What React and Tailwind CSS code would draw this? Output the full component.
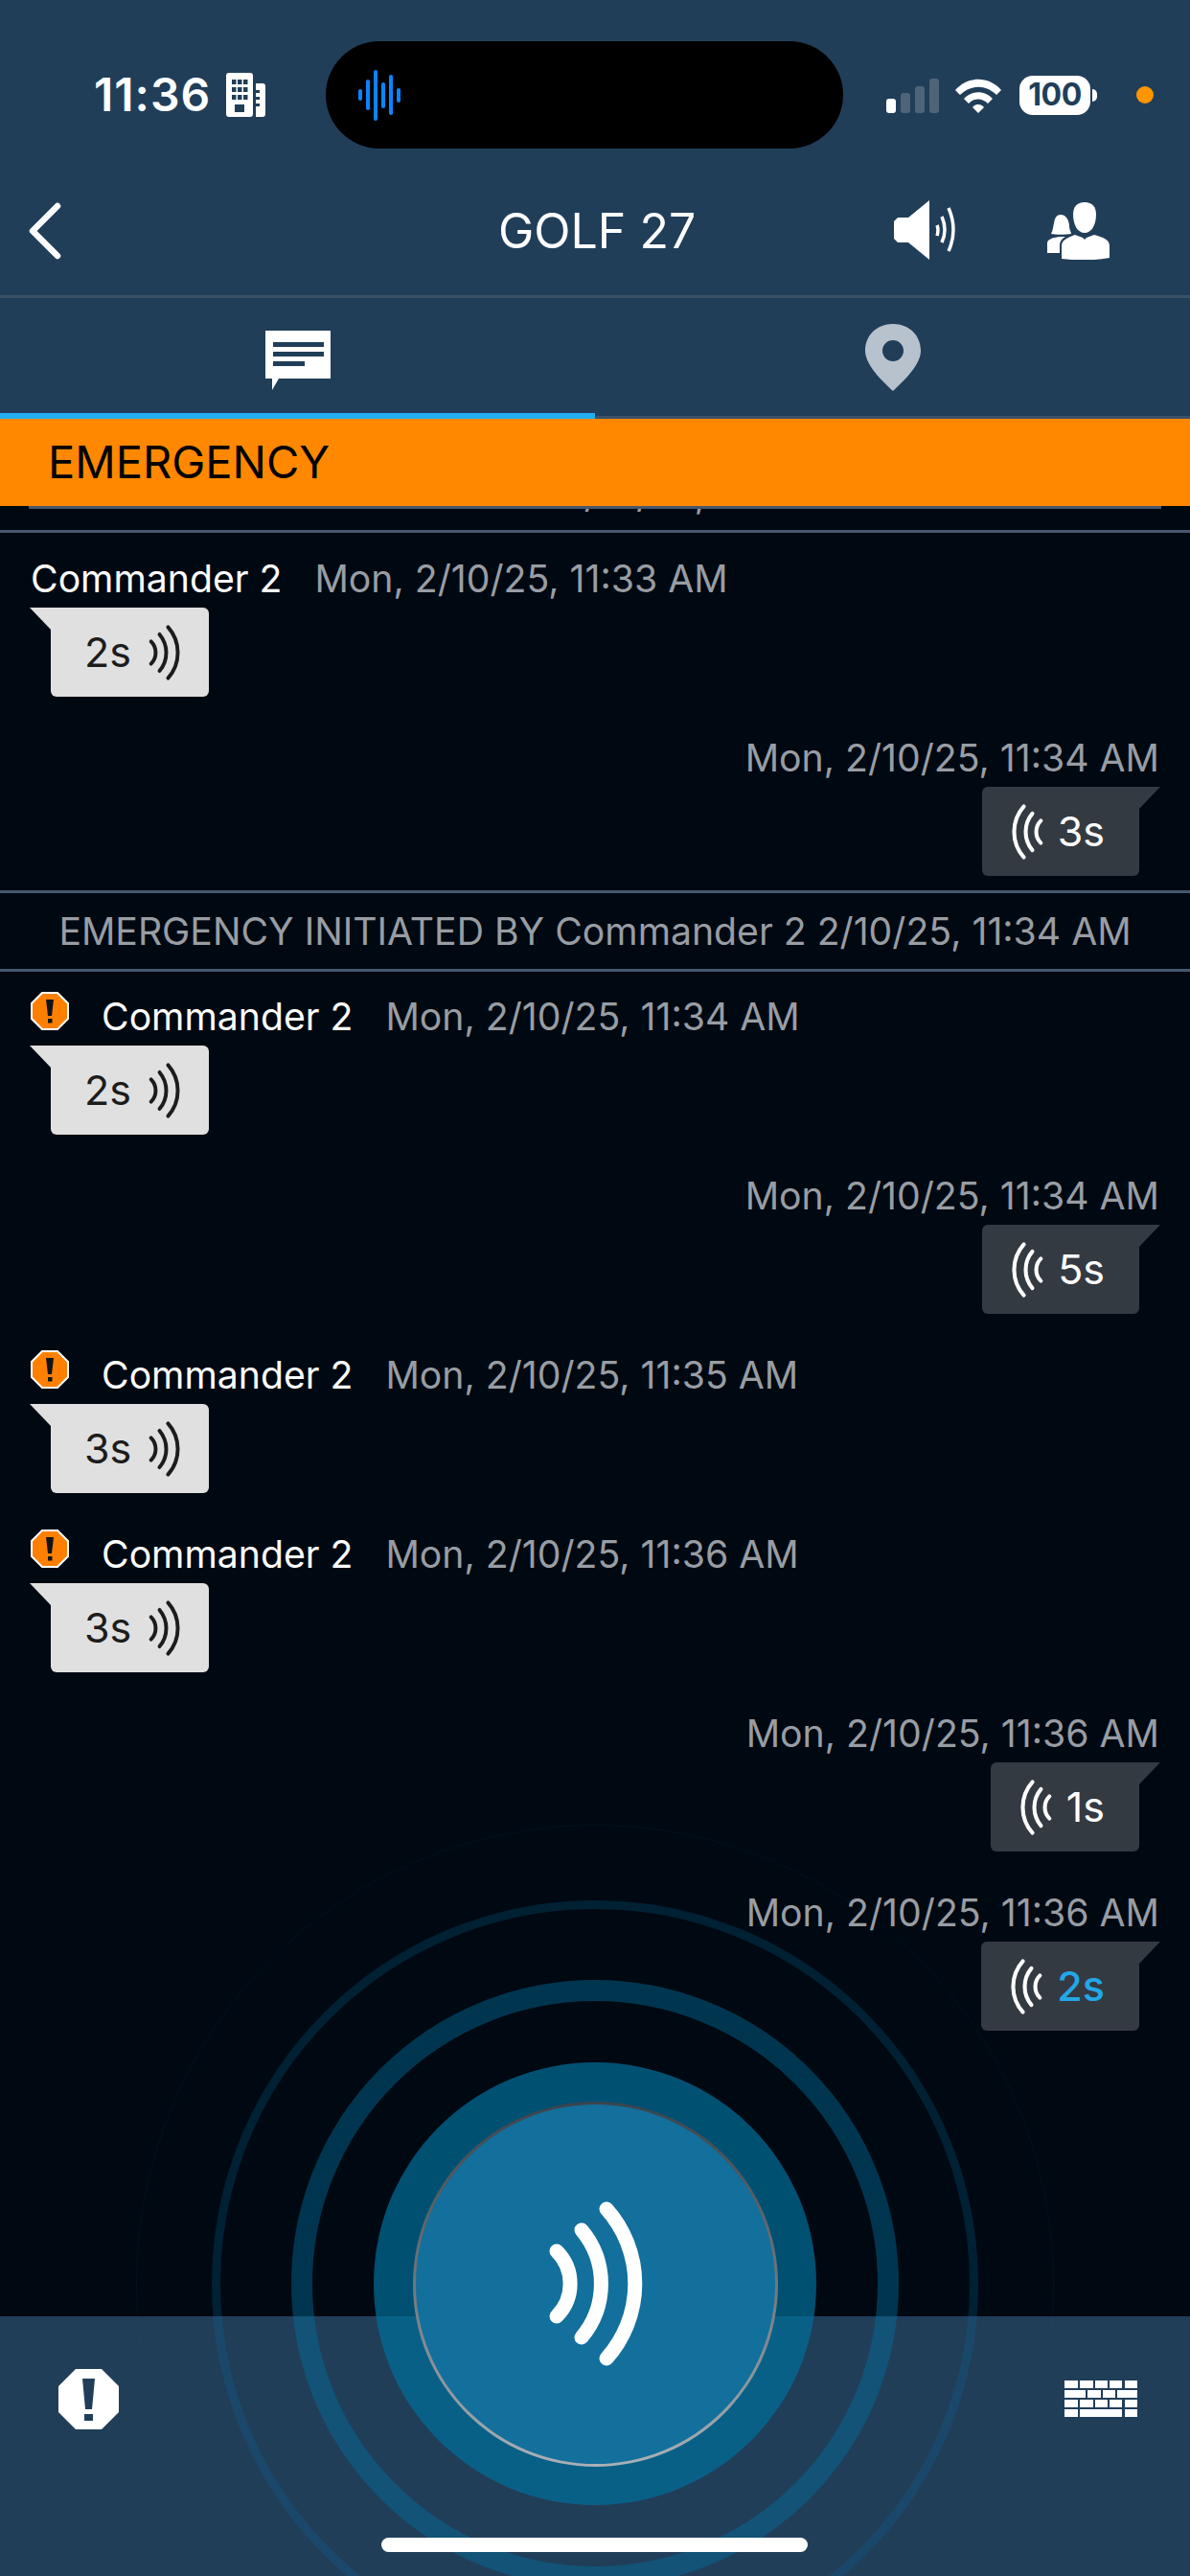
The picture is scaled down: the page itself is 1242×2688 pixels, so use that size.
const FONT = "font-['Inter','Liberation_Sans',sans-serif]";

function WaveIcon({ flip, stroke = 14, className = '' }) {
  return (
    <svg viewBox="0 0 110 176" className={`${flip ? '-scale-x-100' : ''} ${className}`} fill="none" stroke="currentColor" strokeWidth={stroke} strokeLinecap="round">
      <path d="M10 54 A48 48 0 0 1 10 122" />
      <path d="M36 32 A87 87 0 0 1 36 144" />
      <path d="M62 10 A117 117 0 0 1 62 166" />
    </svg>
  );
}

function SmallWarn() {
  return (
    <svg viewBox="0 0 40 40" className="w-10 h-10 -mt-3 shrink-0">
      <polygon points="12,1 28,1 39,12 39,28 28,39 12,39 1,28 1,12" fill="#ff8000" stroke="#fff" strokeWidth="2" />
      <polygon points="16,8 24,8 22,25 18,25" fill="#10141a" />
      <rect x="18" y="28" width="4.5" height="4.5" fill="#10141a" />
    </svg>
  );
}

function Incoming({ time, len, alert }) {
  return (
    <div className="flex flex-col">
      <div className="flex items-center h-10 pl-8">
        {alert && <SmallWarn />}
        <span className={`text-white text-[39.2px] leading-10 ${alert ? 'ml-[34px]' : ''}`}>Commander 2</span>
        <span className="text-[#989da3] text-[39.2px] leading-10 ml-[34px]">{time}</span>
      </div>
      <div className="relative self-start ml-[53px] mt-[10px] h-[93px] flex items-center pl-[35px] pr-[26px] gap-[17px] bg-[#e0e0e0] rounded-[6px] rounded-tl-none text-[#1c1c1c]">
        <div className="absolute -left-[22px] top-0 w-[23px] h-[24px] bg-[#e0e0e0] [clip-path:polygon(0_0,100%_0,100%_100%)]" />
        <span className="text-[43px] leading-none">{len}</span>
        <WaveIcon stroke={11.5} className="w-[38px] h-[60px]" />
      </div>
    </div>
  );
}

function Outgoing({ time, len, live }) {
  return (
    <div className="flex flex-col items-end pr-[32px]">
      <div className="flex items-center h-10 text-[#989da3] text-[39.2px] leading-10">{time}</div>
      <div className="relative mr-[21px] mt-[10px] h-[93px] flex items-center pl-[27px] pr-[36px] gap-[14px] bg-[#343a42] rounded-[6px] rounded-tr-none text-white">
        <div className="absolute -right-[22px] top-0 w-[23px] h-[24px] bg-[#343a42] [clip-path:polygon(0_0,100%_0,0_100%)]" />
        <WaveIcon flip stroke={12} className="w-[38px] h-[60px]" />
        <span className={`text-[43px] leading-none ${live ? 'text-[#22a7e8] font-medium' : ''}`}>{len}</span>
      </div>
    </div>
  );
}

function PeopleIcon() {
  return (
    <svg viewBox="0 0 66 60" className="w-[66px] h-[60px]" fill="#fff">
      <path d="M40 0 C48 0 52 5 52 13 C52 24 47 32 40 32 C33 32 28 24 28 13 C28 5 32 0 40 0Z" />
      <path d="M15 13 C20 13 23 17 24 24 C24 29 26 31 26 33 C21 34 9 34 5 33 C7 29 7 26 8 22 C9 16 11 13 15 13Z" />
      <path d="M16 59 L16 46 C16 40 20 38 30 34 L38 37 L40 39 L42 37 L50 34 C60 37 66 39 66 46 L66 58 C50 61 32 61 16 59Z" />
      <path d="M1 53 L1 43 C1 39 6 37 14 36 L20 36 C15 39 14 42 14 46 L14 53 C10 53 5 53 1 53Z" />
    </svg>
  );
}

function SpeakerIcon() {
  return (
    <svg viewBox="0 0 66 64" className="w-[66px] h-[64px]" fill="none">
      <path d="M4 18 H15 L37 0 V62 L15 44 H4 L0 40 V22Z" fill="#fff" />
      <path d="M45 26 Q47 31 45 37" stroke="#fff" strokeWidth="3.5" />
      <path d="M50 17 Q56 31 50 44" stroke="#fff" strokeWidth="3.5" />
      <path d="M57 8 Q67 31 57 53" stroke="#fff" strokeWidth="3.5" />
    </svg>
  );
}

function KeyboardIcon() {
  const rows = [
    [[0, 14], [16, 14], [32, 13], [47, 13], [63, 13]],
    [[0, 22], [24, 14], [40, 13], [55, 21]],
    [[0, 14], [16, 14], [32, 13], [47, 13], [63, 13]],
    [[0, 14], [16, 44], [63, 13]],
  ];
  return (
    <svg viewBox="0 0 76 38" className="w-[76px] h-[38px]" fill="#fff">
      {rows.map((row, i) =>
        row.map(([x, w]) => <rect key={`${i}-${x}`} x={x} y={i * 10} width={w} height={8} />)
      )}
    </svg>
  );
}

function PttButton() {
  return (
    <div className="absolute left-[621px] top-[2383px] -translate-x-1/2 -translate-y-1/2 w-[958px] h-[958px] rounded-full border border-[#00609a]/10 flex items-center justify-center">
      <div className="w-[800px] h-[800px] rounded-full border-[9px] border-[#00689b]/25 flex items-center justify-center">
        <div className="w-[634px] h-[634px] rounded-full border-[22px] border-[#006c9b]/45 flex items-center justify-center">
          <div className="w-[462px] h-[462px] rounded-full bg-[#006f9b]/70 flex items-center justify-center">
            <div className="w-[381px] h-[381px] rounded-full p-[3px] bg-gradient-to-b from-[#3a444c] to-[#a9b1b6]">
              <div className="w-full h-full rounded-full bg-[#136f9c] flex items-center justify-center text-white">
                <WaveIcon stroke={15} className="w-[110px] h-[176px] ml-[10px]" />
              </div>
            </div>
          </div>
        </div>
      </div>
    </div>
  );
}

export default function App() {
  return (
    <div className={`relative w-[1242px] h-[2688px] overflow-hidden bg-[#000811] flex flex-col ${FONT}`}>
      {/* status bar */}
      <div className="h-[198px] bg-[#213e59] flex items-center text-white shrink-0">
        <span className="ml-[98px] w-[120px] text-[48px] font-semibold leading-none tracking-[1px] whitespace-nowrap">11:36</span>
        <svg viewBox="0 0 41 46" className="ml-[18px] w-[41px] h-[46px]" fill="#fff">
          <rect x="0" y="0" width="28" height="46" rx="3" />
          <path d="M31 11 H38 Q41 11 41 14 V43 Q41 46 38 46 H31Z" />
          <g fill="#213e59">
            <rect x="6" y="7" width="4.5" height="5" /><rect x="12" y="7" width="4.5" height="5" /><rect x="18" y="7" width="4.5" height="5" />
            <rect x="6" y="15" width="4.5" height="5" /><rect x="12" y="15" width="4.5" height="5" /><rect x="18" y="15" width="4.5" height="5" />
            <rect x="6" y="23" width="4.5" height="5" /><rect x="12" y="23" width="4.5" height="5" /><rect x="18" y="23" width="4.5" height="5" />
            <rect x="9" y="33" width="10" height="8" />
            <rect x="31" y="18" width="4" height="3" /><rect x="31" y="25" width="4" height="3" /><rect x="31" y="32" width="4" height="3" />
          </g>
        </svg>
        <div className="ml-[63px] w-[540px] h-[112px] rounded-full bg-black flex items-center pl-[34px] gap-[4px]">
          {[12, 32, 53, 27, 42, 15].map((h, i) => (
            <div key={i} className="w-[4px] rounded-full bg-[#0a84ff]" style={{ height: h }} />
          ))}
        </div>
        <div className="ml-[45px] flex items-end gap-[5px] h-[36px] mt-[2px]">
          <div className="w-[10px] h-[15px] rounded-[3px] bg-white" />
          <div className="w-[10px] h-[21px] rounded-[3px] bg-[#4f6477]" />
          <div className="w-[10px] h-[28px] rounded-[3px] bg-[#4f6477]" />
          <div className="w-[10px] h-[36px] rounded-[3px] bg-[#4f6477]" />
        </div>
        <svg viewBox="0 0 48 36" className="ml-[17px] mt-[2px] w-[48px] h-[36px]" fill="#fff">
          <path d="M0 12 C13 -3 35 -3 48 12 L43 17 C32 6 16 6 5 17Z" />
          <path d="M9 21 C17 12 31 12 39 21 L34 26 C28 20 20 20 14 26Z" />
          <path d="M18 30 C21 26 27 26 30 30 L24 36Z" />
        </svg>
        <div className="ml-[19px] flex items-center">
          <div className="w-[74px] h-[41px] rounded-[14px] bg-white flex items-center justify-center text-[#213e59] text-[32px] font-bold leading-none tracking-[-0.5px]">100</div>
          <div className="ml-[2px] w-[5px] h-[13px] rounded-r-full bg-white" />
        </div>
        <div className="ml-[41px] w-[18px] h-[18px] rounded-full bg-[#ff9500]" />
      </div>

      {/* nav bar */}
      <div className="h-[113px] pb-[24px] bg-[#213e59] border-b-[3px] border-[#3d5166] flex items-center text-white shrink-0">
        <svg viewBox="0 0 36 60" className="ml-[29px] w-[36px] h-[60px]" fill="none" stroke="#fff" strokeWidth="6.5" strokeLinecap="round" strokeLinejoin="round">
          <path d="M31 4 L5 30 L31 56" />
        </svg>
        <span className="ml-[455px] text-[50px] leading-none">GOLF 27</span>
        <div className="ml-auto flex items-center gap-[93px] pr-[84px]">
          <SpeakerIcon />
          <PeopleIcon />
        </div>
      </div>

      {/* tabs */}
      <div className="relative h-[126px] bg-[#213e59] flex shrink-0 border-b-[3px] border-[#3d5166]">
        <div className="w-[621px] flex items-center justify-center pt-[7px]">
          <svg viewBox="0 0 68 62" className="w-[68px] h-[62px]">
            <path d="M0 0 H68 V50 H14 L7 62 V50 H0Z" fill="#fff" />
            <rect x="8" y="12" width="53" height="5" fill="#213e59" />
            <rect x="8" y="22" width="53" height="5" fill="#213e59" />
            <rect x="8" y="32" width="33" height="5" fill="#213e59" />
          </svg>
        </div>
        <div className="w-[621px] flex items-center justify-center">
          <svg viewBox="0 0 58 70" className="w-[58px] h-[70px]">
            <path fillRule="evenodd" d="M29 0 C46 0 58 12 58 28 C58 42 42 58 29 70 C16 58 0 42 0 28 C0 12 12 0 29 0Z M29 17 A11 11 0 1 0 29 39 A11 11 0 1 0 29 17Z" fill="#b8c2cc" />
          </svg>
        </div>
        <div className="absolute left-0 -bottom-[3px] w-[621px] h-[6px] bg-[#23aeef]" />
      </div>

      {/* emergency banner */}
      <div className="h-[91px] bg-[#ff8800] flex items-center pl-[50px] pb-[2px] text-black text-[47px] leading-none shrink-0">EMERGENCY</div>

      {/* messages */}
      <div className="flex-1 flex flex-col">
        <div className="h-[25px] overflow-hidden shrink-0 px-[30px]">
          <div className="h-[3px] bg-[#46586e]" />
          <div className="h-[6px] overflow-hidden flex flex-col justify-end">
            <div className="text-[#989da3] text-[39px] leading-[38px] pl-[556px] mb-[2px] shrink-0 whitespace-nowrap">2/10/25, 11:33 AM</div>
          </div>
        </div>
        <div className="h-[3px] bg-[#46586e] shrink-0" />
        <div className="pt-[28px] flex flex-col gap-[44px]">
          <Incoming time="Mon, 2/10/25, 11:33 AM" len="2s" />
          <Outgoing time="Mon, 2/10/25, 11:34 AM" len="3s" />
        </div>
        <div className="mt-[15px] h-[3px] bg-[#46586e] shrink-0" />
        <div className="h-[79px] flex items-center justify-center text-[#989da3] text-[39.2px] leading-none">EMERGENCY INITIATED BY Commander 2 2/10/25, 11:34 AM</div>
        <div className="h-[3px] bg-[#46586e] shrink-0" />
        <div className="pt-[27px] flex flex-col gap-[44px]">
          <Incoming alert time="Mon, 2/10/25, 11:34 AM" len="2s" />
          <Outgoing time="Mon, 2/10/25, 11:34 AM" len="5s" />
          <Incoming alert time="Mon, 2/10/25, 11:35 AM" len="3s" />
          <Incoming alert time="Mon, 2/10/25, 11:36 AM" len="3s" />
          <Outgoing time="Mon, 2/10/25, 11:36 AM" len="1s" />
          <Outgoing live time="Mon, 2/10/25, 11:36 AM" len="2s" />
        </div>
      </div>

      {/* bottom bar */}
      <div className="absolute left-0 right-0 bottom-0 h-[271px] bg-[#213e59] flex items-start justify-between pl-[61px] pr-[55px]">
        <svg viewBox="0 0 63 63" className="mt-[55px] w-[63px] h-[63px]">
          <polygon points="18,0 45,0 63,18 63,45 45,63 18,63 0,45 0,18" fill="#fff" />
          <polygon points="25,10 38,10 35,42 28,42" fill="#213e59" />
          <rect x="27" y="47" width="9" height="7" fill="#213e59" />
        </svg>
        <div className="mt-[67px]"><KeyboardIcon /></div>
      </div>

      <PttButton />

      {/* home indicator */}
      <div className="absolute left-[398px] bottom-[25px] w-[445px] h-[15px] rounded-full bg-white" />
    </div>
  );
}
